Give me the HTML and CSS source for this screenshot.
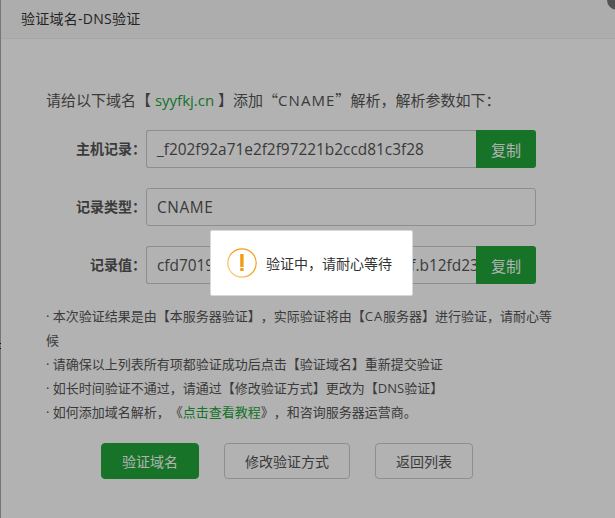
FILE: index.html
```html
<!DOCTYPE html>
<html lang="zh-CN">
<head>
  <meta charset="UTF-8" />
  <meta name="viewport" content="width=device-width, initial-scale=1" />
  <title>验证域名-DNS验证</title>
  <link rel="stylesheet" href="styles.css">
</head>
<body>
  <div class="dialog">
    <div class="dialog-title">验证域名-DNS验证</div>
    <div class="dialog-body">
      <p class="intro">请给以下域名【 <span class="green">syyfkj.cn</span> 】添加<span class="quote">“</span><span class="caps">CNAME</span><span class="quote">”</span>解析，解析参数如下：</p>
      <div class="form-row">
        <label>主机记录：</label>
        <div class="field with-btn">_f202f92a71e2f2f97221b2ccd81c3f28</div>
        <button class="copy">复制</button>
      </div>
      <div class="form-row">
        <label>记录类型：</label>
        <div class="field caps">CNAME</div>
      </div>
      <div class="form-row">
        <label>记录值：</label>
        <div class="field with-btn">cfd7019a2b4e6c83d05f1e97a6c42ef.b12fd23a4c9e</div>
        <button class="copy">复制</button>
      </div>
      <ul class="notes">
        <li>· 本次验证结果是由【本服务器验证】，实际验证将由【<span class="caps">CA</span>服务器】进行验证，请耐心等候</li>
        <li>· 请确保以上列表所有项都验证成功后点击【验证域名】重新提交验证</li>
        <li>· 如长时间验证不通过，请通过【修改验证方式】更改为【DNS验证】</li>
        <li>· 如何添加域名解析，《<span class="green">点击查看教程</span>》，和咨询服务器运营商。</li>
      </ul>
      <div class="actions">
        <button class="btn primary">验证域名</button>
        <button class="btn change">修改验证方式</button>
        <button class="btn back">返回列表</button>
      </div>
    </div>
  </div>
  <div class="edge-mark"></div>
  <div class="close-dot"></div>
  <div class="shade"></div>
  <div class="toast">
    <svg class="toast-icon" viewBox="0 0 30 30" width="30" height="30">
      <defs>
        <linearGradient id="ring" x1="1" y1="0" x2="0" y2="1">
          <stop offset="0.45" stop-color="#f39c12"/>
          <stop offset="1" stop-color="#fbd9a0"/>
        </linearGradient>
      </defs>
      <circle cx="15" cy="15" r="14.2" fill="none" stroke="url(#ring)" stroke-width="1.2"/>
      <rect x="13.2" y="6" width="3.4" height="13" fill="#f39c12"/>
      <rect x="13.2" y="20" width="3.4" height="3" fill="#f39c12"/>
    </svg>
    <span>验证中，请耐心等待</span>
  </div>
</body>
</html>
```

FILE: styles.css
```css
html, body {
  height: 100%;
}
body {
  margin: 0;
  padding-left: 1px;
  background: #aaa;
  color: #555;
  font-family: "Open Sans", "Liberation Sans", "Noto Sans CJK SC", sans-serif;
  font-size: 14px;
  text-spacing-trim: space-all;
  overflow: hidden;
}
.dialog {
  height: 100%;
  background: #fff;
}
.dialog-title {
  height: 38px;
  line-height: 38px;
  padding-left: 20px;
  background: #f8f8f8;
  border-bottom: 1px solid #eee;
  color: #333;
  font-size: 14px;
  letter-spacing: .25px;
}
.dialog-body {
  padding: 49px 45px 0;
}
.intro {
  margin: 0 0 18px;
  line-height: 24px;
  font-size: 15px;
  color: #555;
}
.quote {
  font-family: "Noto Sans CJK SC", sans-serif;
}
.caps {
  letter-spacing: .07em;
}
.green {
  color: #20a53a;
}
.form-row {
  display: flex;
  height: 38px;
  margin-bottom: 20px;
}
.form-row label {
  width: 100px;
  line-height: 38px;
  text-align: right;
  font-weight: bold;
  color: #555;
}
.field {
  width: 390px;
  box-sizing: border-box;
  padding: 0 10px;
  line-height: 38px;
  border: 1px solid #ccc;
  border-radius: 3px;
  font-size: 15.4px;
  white-space: nowrap;
  overflow: hidden;
}
.field.caps {
  letter-spacing: .04em;
}
.field.with-btn {
  width: 330px;
  border-right: 0;
  border-radius: 3px 0 0 3px;
}
.copy {
  width: 60px;
  border: 0;
  border-radius: 0 3px 3px 0;
  background: #20a53a;
  color: #fff;
  font: inherit;
  font-size: 15px;
}
.notes {
  list-style: none;
  margin: 0;
  padding: 0;
  width: 510px;
  font-size: 13px;
  line-height: 24px;
}
.actions {
  display: flex;
  gap: 25px;
  margin: 19px 0 0 55px;
}
.btn {
  height: 36px;
  box-sizing: border-box;
  border: 1px solid #ccc;
  border-radius: 4px;
  background: #fff;
  color: #555;
  font: inherit;
}
.btn.primary {
  width: 98px;
  border-color: #20a53a;
  background: #20a53a;
  color: #fff;
}
.btn.change {
  width: 126px;
}
.btn.back {
  width: 98px;
}
.edge-mark {
  position: absolute;
  left: 0;
  top: 343px;
  width: 1px;
  height: 4px;
  border-top: 1px solid #222;
  border-bottom: 1px solid #222;
}
.close-dot {
  position: absolute;
  top: -10px;
  left: 607px;
  width: 20px;
  height: 20px;
  border-radius: 50%;
  background: #777;
}
.shade {
  position: absolute;
  inset: 0;
  background: rgba(0, 0, 0, .3);
}
.toast {
  position: absolute;
  left: 210px;
  top: 230px;
  width: 203px;
  height: 66px;
  box-sizing: border-box;
  padding-left: 16px;
  display: flex;
  align-items: center;
  gap: 9px;
  background: #fff;
  border: 1px solid #d8d8d8;
  border-radius: 2px;
  color: #333;
  font-size: 14px;
}
.toast-icon {
  flex: none;
}
```
